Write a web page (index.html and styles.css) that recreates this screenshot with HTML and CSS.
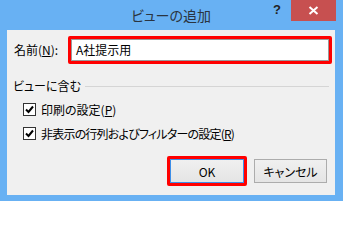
FILE: index.html
```html
<!DOCTYPE html>
<html lang="ja">
<head>
<meta charset="utf-8">
<link rel="stylesheet" href="styles.css">
</head>
<body>
<div class="window">
  <div class="titlebar">
    <span class="title">ビューの追加</span>
    <span class="help">?</span>
    <span class="close"><svg width="11" height="9" viewBox="0 0 11 9"><path d="M1.5 1 L9.5 8 M9.5 1 L1.5 8" stroke="#fff" stroke-width="2" fill="none"/></svg></span>
  </div>
  <div class="client">
    <div class="name-row">
      <span class="name-label">名前(<u>N</u>):</span>
      <div class="hl hl-input"><div class="input">A社提示用</div></div>
    </div>
    <div class="group">
      <span class="group-label">ビューに含む</span>
      <span class="group-line"></span>
    </div>
    <div class="check-row">
      <span class="box"><svg width="11" height="11" viewBox="0 0 11 11"><path d="M2 5.5 L4.5 8 L9 2.5" stroke="#000" stroke-width="2" fill="none"/></svg></span>
      <span class="check-label">印刷の設定(<u>P</u>)</span>
    </div>
    <div class="check-row">
      <span class="box"><svg width="11" height="11" viewBox="0 0 11 11"><path d="M2 5.5 L4.5 8 L9 2.5" stroke="#000" stroke-width="2" fill="none"/></svg></span>
      <span class="check-label check-label-long">非表示の行列およびフィルターの設定(<u>R</u>)</span>
    </div>
    <div class="buttons">
      <div class="hl hl-ok"><div class="btn btn-default">OK</div></div>
      <div class="btn btn-cancel">キャンセル</div>
    </div>
  </div>
</div>
</body>
</html>
```
FILE: styles.css
```css
html, body {
  margin: 0;
  padding: 0;
  overflow: hidden;
}
body {
  font-family: "Noto Sans CJK JP", "Noto Sans", sans-serif;
  font-feature-settings: "palt";
  color: #000;
}
.window {
  position: relative;
  width: 343px;
  height: 201px;
  box-sizing: border-box;
  background: #68b1f3;
  padding: 0 8px 6px 7px;
  display: flex;
  flex-direction: column;
}
.titlebar {
  height: 30px;
  display: flex;
  align-items: center;
  justify-content: center;
}
.title {
  font-size: 14px;
  color: #2a3440;
  margin-top: -1px;
}
.help {
  position: absolute;
  left: 273px;
  top: 2px;
  font-family: "Liberation Sans", sans-serif;
  font-weight: bold;
  font-size: 13px;
  color: #222;
}
.close {
  position: absolute;
  left: 291px;
  top: 0;
  width: 45px;
  height: 21px;
  background: #c75050;
  display: flex;
  align-items: center;
  justify-content: center;
}
.client {
  flex: 1;
  background: #f0f0f0;
  font-size: 12px;
  display: flex;
  flex-direction: column;
}
.name-row {
  display: flex;
  align-items: center;
  margin-top: 6px;
  padding-left: 7px;
}
.name-label {
  width: 54px;
  line-height: 16px;
}
.hl {
  border: 3px solid #ff0000;
  border-radius: 2px;
  box-sizing: border-box;
}
.hl-input {
  width: 264px;
  height: 28px;
}
.input {
  height: 100%;
  box-sizing: border-box;
  border: 1px solid #9a9a9a;
  background: #fff;
  padding-left: 4px;
  font-size: 12px;
  line-height: 20px;
}
.group {
  display: flex;
  align-items: center;
  margin-top: 14px;
  padding-left: 6px;
  padding-right: 6px;
  height: 16px;
}
.group-label {
  line-height: 16px;
}
.group-line {
  flex: 1;
  height: 1px;
  background: #d5d5d5;
  margin-left: 4px;
}
.check-row {
  display: flex;
  align-items: center;
  padding-left: 16px;
  height: 16px;
  margin-top: 7px;
}
.check-row + .check-row {
  margin-top: 8px;
}
.check-label-long {
  letter-spacing: -0.8px;
}
.box {
  width: 13px;
  height: 13px;
  box-sizing: border-box;
  border: 1px solid #333;
  background: #fff;
  display: flex;
  align-items: center;
  justify-content: center;
  margin-right: 5px;
}
.buttons {
  display: flex;
  align-items: center;
  margin-top: 15px;
  padding-left: 160px;
}
.hl-ok {
  width: 80px;
  height: 30px;
}
.btn {
  box-sizing: border-box;
  display: flex;
  align-items: center;
  justify-content: center;
  background: linear-gradient(#f0f0f0, #e5e5e5);
  font-size: 12px;
}
.btn-default {
  height: 100%;
  border: 1px solid #3c8ee8;
}
.btn-cancel {
  width: 73px;
  height: 24px;
  border: 1px solid #acacac;
  margin-left: 7px;
}
```
